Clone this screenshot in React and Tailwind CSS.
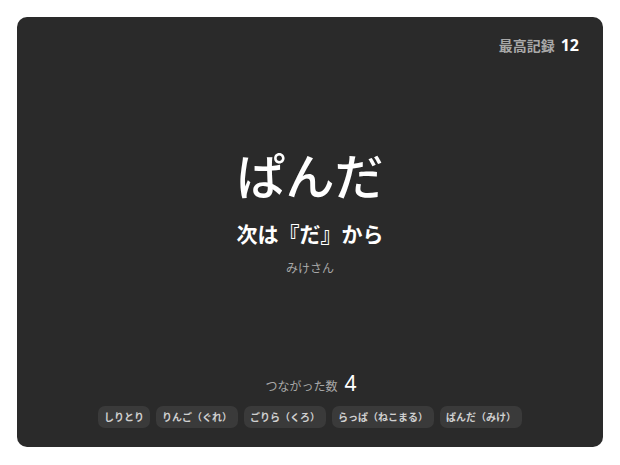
import React from "react";

const history = [
  "しりとり",
  "りんご（ぐれ）",
  "ごりら（くろ）",
  "らっぱ（ねこまる）",
  "ぱんだ（みけ）",
];

export default function App() {
  return (
    <div
      className="w-[620px] h-[465px] bg-white pl-[17px] pr-[17px] pt-[17px] pb-[18px]"
      style={{ fontFamily: '"Noto Sans", "Noto Sans CJK JP", sans-serif' }}
    >
      <div className="h-full w-full rounded-[10px] bg-[#2a2a2a] flex flex-col pt-[20px] pb-[19px] px-[24px]">
        <div className="flex justify-end items-baseline gap-[6px] h-[18px]">
          <span className="text-[14px] font-bold text-[#a8a8a8] leading-none">最高記録</span>
          <span className="text-[16px] font-bold text-white leading-none">12</span>
        </div>
        <div className="flex-1 flex flex-col items-center justify-center pb-[2px]">
          <div className="text-[49px] font-medium text-white leading-none">ぱんだ</div>
          <div className="mt-[23px] text-[21px] font-bold text-white leading-none">次は『だ』から</div>
          <div className="mt-[18px] text-[12px] text-[#a8a8a8] leading-none">みけさん</div>
        </div>
        <div className="flex flex-col items-center">
          <div className="flex items-baseline gap-[7px] pl-[2px]">
            <span className="text-[12px] text-[#a8a8a8] leading-none">つながった数</span>
            <span className="text-[21px] font-normal text-white leading-none">4</span>
          </div>
          <div className="mt-[12px] flex gap-[6px] justify-center">
            {history.map((w) => (
              <span
                key={w}
                className="rounded-[7px] bg-[#3a3a3a] px-[6px] h-[22px] flex items-center text-[10px] font-bold text-[#d0d0d0] leading-none"
              >
                {w}
              </span>
            ))}
          </div>
        </div>
      </div>
    </div>
  );
}
